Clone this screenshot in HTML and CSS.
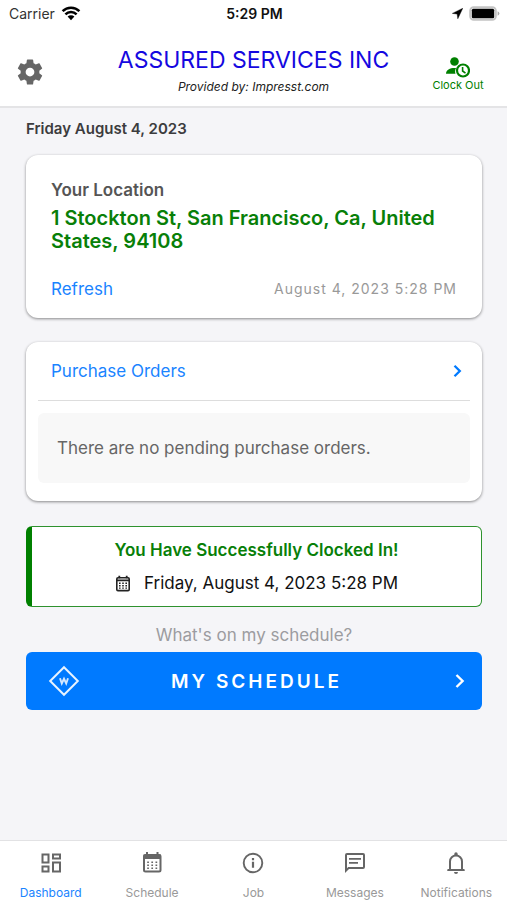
FILE: index.html
```html
<!DOCTYPE html>
<html lang="en">
<head>
<meta charset="utf-8">
<meta name="viewport" content="width=device-width, initial-scale=1">
<title>Dashboard</title>
<link rel="stylesheet" href="styles.css">
</head>
<body>
<div class="status-bar">
  <div class="status-left">
    <span>Carrier</span>
    <svg width="20" height="15" viewBox="0 0 20 15" aria-hidden="true"><path d="M1.6 5.2a12 12 0 0 1 16.8 0M4.4 8.4a8 8 0 0 1 11.2 0" fill="none" stroke="#000" stroke-width="2.5"/><path d="M10 14.2l3.4-3.6a4.8 4.8 0 0 0-6.8 0z"/></svg>
  </div>
  <div class="status-time">5:29 PM</div>
  <div class="status-right">
    <svg width="11" height="11" viewBox="0 0 11 11" aria-hidden="true"><path d="M10.8.2L.3 5.4l4.8.6.7 4.8z" stroke="#000" stroke-width=".4"/></svg>
    <svg width="31" height="15" viewBox="0 0 31 15" aria-hidden="true"><rect x="1.200" y="1.200" width="25.600" height="12.600" rx="3.500" fill="#fff" stroke="#c4c4c4" stroke-width="2"/><rect x="2.800" y="2.800" width="22.400" height="9.400" rx="1.500"/><path d="M28.6 5.2q1.8.8 1.8 2.3t-1.8 2.3z" fill="#aaa"/></svg>
  </div>
</div>

<header class="header">
  <button class="icon-button" type="button" aria-label="Settings">
    <svg width="30" height="30" viewBox="0 0 24 24" aria-hidden="true"><path fill="#666" d="M12 15.5A3.5 3.5 0 0 1 8.5 12 3.5 3.5 0 0 1 12 8.500a3.500 3.500 0 0 1 3.500 3.500 3.500 3.500 0 0 1-3.500 3.500m7.430-2.530c.04-.32.07-.64.07-.97s-.03-.66-.07-1l2.110-1.630c.19-.15.24-.42.12-.64l-2-3.460c-.12-.22-.39-.31-.61-.22l-2.490 1c-.52-.39-1.060-.73-1.690-.98l-.37-2.650A.506.506 0 0 0 14 2h-4c-.25 0-.46.18-.5.42l-.37 2.650c-.63.25-1.170.59-1.690.98l-2.490-1c-.22-.09-.49 0-.61.22l-2 3.460c-.13.22-.07.49.12.64L4.570 11c-.04.34-.07.67-.07 1s.03.65.07.97l-2.110 1.660c-.19.15-.25.42-.12.64l2 3.460c.12.22.39.300.61.22l2.490-1.010c.52.400 1.060.740 1.690.990l.370 2.650c.04.24.25.42.5.42h4c.25 0 .46-.18.5-.42l.37-2.650c.63-.26 1.170-.590 1.690-.990l2.490 1.010c.22.080.49 0 .61-.220l2-3.460c.12-.22.07-.49-.12-.64z"/></svg>
  </button>
  <div class="brand">
    <h1>ASSURED SERVICES INC</h1>
    <p>Provided by: Impresst.com</p>
  </div>
  <button class="clock-out" type="button">
    <svg width="24" height="21" viewBox="0 0 24 21" fill="#008000" aria-hidden="true"><circle cx="8.500" cy="4.500" r="4.300"/><path d="M0 16.800c0-4 4-5.800 8.500-5.800h1.600c-1 1.700-1.300 3.900-.6 5.800z"/><circle cx="17" cy="13.500" r="6" fill="#fff" stroke="#008000" stroke-width="2.200"/><path d="M16.600 9.900v4.100l2.900 2.200" fill="none" stroke="#008000" stroke-width="1.600"/></svg>
    <span>Clock Out</span>
  </button>
</header>

<main class="content">
  <p class="today">Friday August 4, 2023</p>

  <section class="card location">
    <h2>Your Location</h2>
    <p class="address">1 Stockton St, San Francisco, Ca, United States, 94108</p>
    <div class="location-footer">
      <a href="#refresh">Refresh</a>
      <time>August 4, 2023 5:28 PM</time>
    </div>
  </section>

  <section class="card orders">
    <a class="orders-link" href="#orders">
      <span>Purchase Orders</span>
      <svg width="9" height="14" viewBox="0 0 9 14" aria-hidden="true"><path d="M1.500 1.700L6.800 7l-5.300 5.300" fill="none" stroke="#007aff" stroke-width="2.300"/></svg>
    </a>
    <p class="orders-empty">There are no pending purchase orders.</p>
  </section>

  <section class="alert">
    <h2>You Have Successfully Clocked In!</h2>
    <p>
      <svg width="16" height="17" viewBox="0 0 16 17" aria-hidden="true"><rect x="1.800" y="2.800" width="12.400" height="12.800" rx="1.200" fill="none" stroke="#222" stroke-width="1.600"/><path d="M2 5.400h12M4.300.8v2.400M11.700.8v2.400" stroke="#222" stroke-width="1.800"/><path d="M4 8.300h8M4 10.700h8M4 13.100h8" stroke="#222" stroke-width="1.400" stroke-dasharray="1.600 1.600"/></svg>
      <span>Friday, August 4, 2023 5:28 PM</span>
    </p>
  </section>

  <p class="prompt">What's on my schedule?</p>
  <button class="schedule-button" type="button">
    <svg width="32" height="32" viewBox="0 0 32 32" aria-hidden="true"><path d="M16 2.200L29.800 16 16 29.800 2.200 16z" fill="none" stroke="#e8f3ff" stroke-width="2"/><path d="M12 13.200l1.800 5.300L16 13.800l2.200 4.700 1.800-5.300" fill="none" stroke="#d4e8ff" stroke-width="1.900"/></svg>
    <span>MY SCHEDULE</span>
    <svg width="10" height="16" viewBox="0 0 10 16" aria-hidden="true"><path d="M1.500 2L7.600 8l-6.100 6" fill="none" stroke="#fff" stroke-width="2.400"/></svg>
  </button>
</main>

<nav class="tabs">
  <a class="tab active" href="#dashboard">
    <svg width="24" height="24" viewBox="0 0 24 24" aria-hidden="true"><path fill="none" stroke="#666" stroke-width="2" d="M3.500 3.500h6v8h-6zM14 3.500h7v4h-7zM14 11.500h7v9h-7zM3.500 15.500h6v5h-6z"/></svg>
    <span>Dashboard</span>
  </a>
  <a class="tab" href="#schedule">
    <svg width="24" height="24" viewBox="0 0 24 24" aria-hidden="true"><rect x="4" y="4" width="16.500" height="16.500" rx="1.500" fill="none" stroke="#666" stroke-width="2"/><path fill="#666" d="M3.500 3.500h17.500V8H3.500zM6 1h2v4H6zM16.500 1h2v4h-2z"/><path d="M7.200 11.200h10M7.200 14.200h10M7.200 17.200h10" stroke="#666" stroke-width="1.500" stroke-dasharray="1.700 2.450"/></svg>
    <span>Schedule</span>
  </a>
  <a class="tab" href="#job">
    <svg width="24" height="24" viewBox="0 0 24 24" aria-hidden="true"><circle cx="12" cy="12" r="9.300" fill="none" stroke="#666" stroke-width="1.900"/><path d="M12 10.800v6M12 7v2.200" stroke="#666" stroke-width="2.200"/></svg>
    <span>Job</span>
  </a>
  <a class="tab" href="#messages">
    <svg width="24" height="24" viewBox="0 0 24 24" aria-hidden="true"><path fill="#666" d="M4 2h16a2 2 0 0 1 2 2v12a2 2 0 0 1-2 2H6l-4 4V4a2 2 0 0 1 2-2m0 2v13.170L5.170 16H20V4zm2 3h12v1.700H6zm0 4h9v1.700H6z"/></svg>
    <span>Messages</span>
  </a>
  <a class="tab" href="#notifications">
    <svg width="24" height="24" viewBox="0 0 24 24" aria-hidden="true"><path d="M6 18.500V10.500a6 6 0 0 1 12 0v8M3.500 19h17" fill="none" stroke="#666" stroke-width="2"/><path fill="#666" d="M3 20l3-3v2h12v-2l3 3zM10 21h4a2 2 0 0 1-4 0M10.300 4.500V3a1.700 1.700 0 0 1 3.400 0v1.500z"/></svg>
    <span>Notifications</span>
  </a>
</nav>
</body>
</html>
```

FILE: styles.css
```css
* { box-sizing: border-box; }

body {
  margin: 0;
  min-height: 100vh;
  display: flex;
  flex-direction: column;
  background: #f5f5f8;
  color: #111;
  font-family: Inter, "Liberation Sans", sans-serif;
}

h1, h2, p { margin: 0; }
a { text-decoration: none; color: #1a84ff; }
button { border: 0; padding: 0; background: none; font: inherit; cursor: pointer; }
svg { display: block; flex: none; }

.status-bar {
  display: grid;
  grid-template-columns: 1fr auto 1fr;
  align-items: center;
  height: 27px;
  padding: 0 7px 0 9px;
  background: #fff;
  font-size: 14px;
}
.status-left { display: flex; align-items: center; gap: 6px; color: #333; }
.status-time { font-weight: 600; }
.status-right { display: flex; align-items: center; justify-content: flex-end; gap: 6px; }

.header {
  display: grid;
  grid-template-columns: 80px 1fr 80px;
  align-items: center;
  height: 81px;
  padding: 0 9px;
  background: #fff;
  border-bottom: 2px solid #e4e4e6;
}
.icon-button { justify-self: start; padding: 11px 0 0 6px; }
.brand { padding-top: 10px; text-align: center; }
.brand h1 { font-size: 23px; line-height: 30px; font-weight: 400; color: #1508e0; white-space: nowrap; }
.brand p { font-size: 12px; line-height: 24px; font-style: italic; color: #222; }
.clock-out {
  display: flex;
  flex-direction: column;
  align-items: center;
  justify-self: center;
  padding-top: 16px;
  font-size: 11px;
  line-height: 14px;
  color: #008000;
}

.content { flex: 1; padding: 12px 25px 24px 26px; }
.today { font-size: 15px; line-height: 18px; font-weight: 600; color: #3c3c3e; }

.card {
  border-radius: 12px;
  background: #fff;
  box-shadow: 0 1px 3px rgba(0, 0, 0, 0.45);
}
.location { margin-top: 17px; padding: 24px 25px 17px; }
.location h2 { font-size: 17px; line-height: 22px; font-weight: 600; color: #555; }
.address { margin-top: 6px; font-size: 20px; line-height: 23px; font-weight: 600; color: #087f08; }
.location-footer {
  display: flex;
  align-items: center;
  justify-content: space-between;
  margin-top: 24px;
  font-size: 17px;
  line-height: 24px;
}
.location-footer time { font-size: 14px; letter-spacing: 1px; color: #999; }

.orders { margin-top: 24px; padding: 0 12px 18px; }
.orders-link {
  display: flex;
  align-items: center;
  justify-content: space-between;
  height: 59px;
  padding: 0 8px 0 13px;
  border-bottom: 1px solid #ddd;
  font-size: 17px;
}
.orders-empty {
  margin-top: 12px;
  padding: 23px 19px;
  border-radius: 6px;
  background: #f8f8f8;
  font-size: 17px;
  line-height: 24px;
  color: #666;
}

.alert {
  margin-top: 25px;
  padding: 11px 12px;
  border: 1px solid #2e922e;
  border-left: 6px solid #008000;
  border-radius: 6px;
  background: #fff;
  text-align: center;
}
.alert h2 { font-size: 17px; line-height: 24px; font-weight: 600; color: #087f08; }
.alert p {
  display: flex;
  align-items: center;
  justify-content: center;
  gap: 13px;
  margin-top: 9px;
  font-size: 17px;
  line-height: 24px;
}

.prompt { margin-top: 16px; font-size: 17px; line-height: 24px; text-align: center; color: #9c9ca0; }
.schedule-button {
  display: grid;
  grid-template-columns: 32px 1fr 32px;
  align-items: center;
  justify-items: center;
  width: 100%;
  height: 58px;
  margin-top: 5px;
  padding: 0 17px 0 22px;
  border-radius: 6px;
  background: #007aff;
  color: #fff;
  font-size: 19px;
  font-weight: 600;
  letter-spacing: 3px;
}
.schedule-button svg:last-child { justify-self: end; }

.tabs {
  display: grid;
  grid-template-columns: repeat(5, 1fr);
  height: 60px;
  border-top: 1px solid #e2e2e4;
  background: #fff;
}
.tab {
  display: flex;
  flex-direction: column;
  align-items: center;
  gap: 9px;
  padding-top: 10px;
  font-size: 12px;
  line-height: 18px;
  color: #999;
}
.tab.active { color: #1a84ff; }
```
